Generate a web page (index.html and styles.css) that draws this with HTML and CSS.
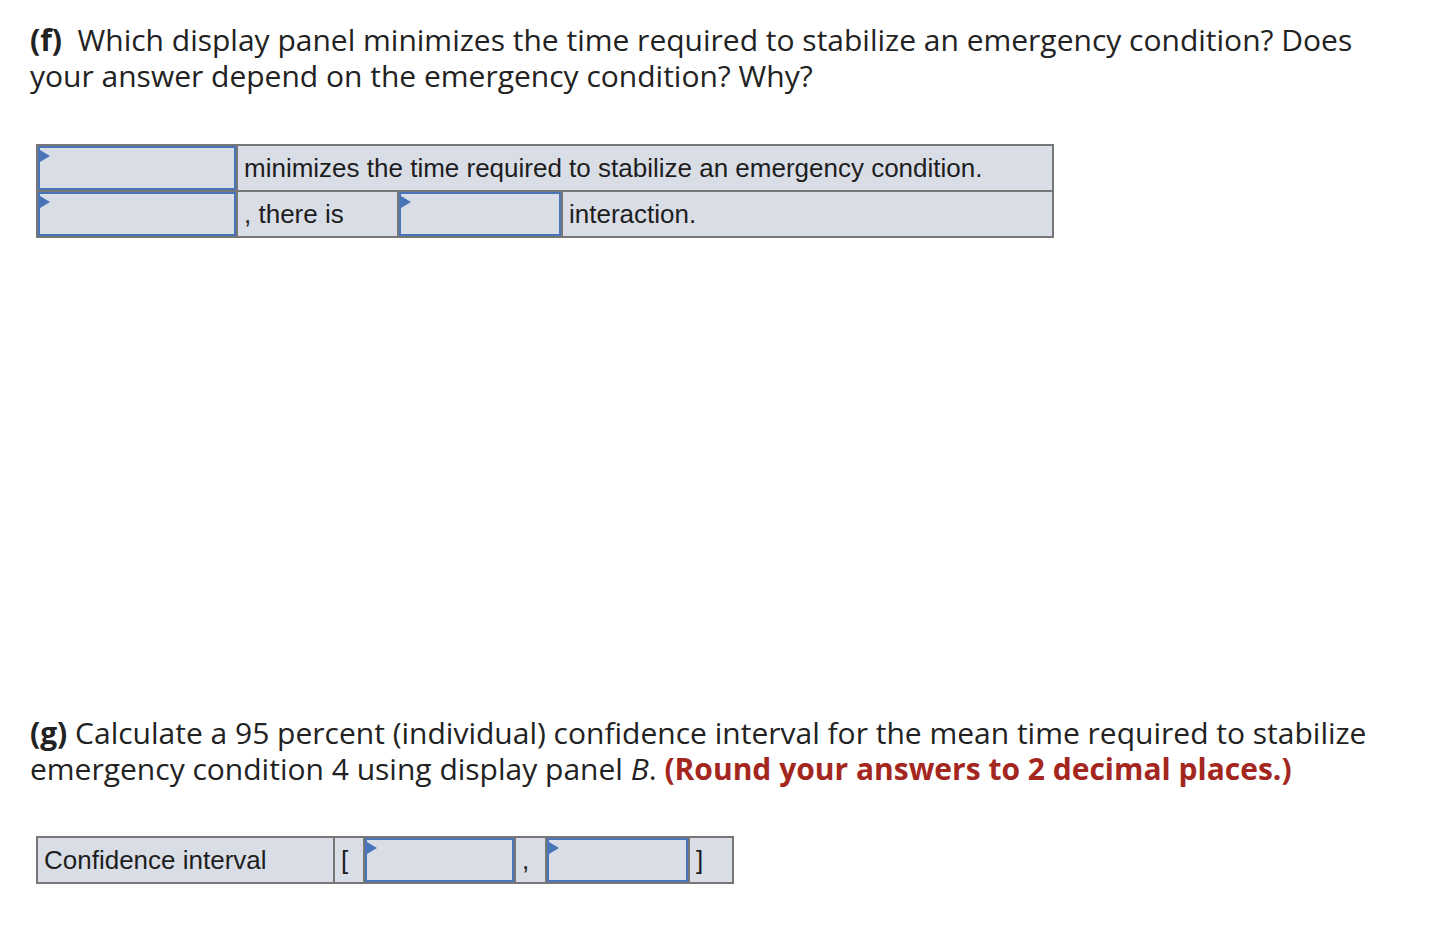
FILE: index.html
```html
<!DOCTYPE html>
<html>
<head>
<meta charset="utf-8">
<link rel="stylesheet" href="styles.css">
</head>
<body>
<div class="page">
  <section class="part part-f">
    <p class="prompt"><b>(f)</b>&nbsp; Which display panel minimizes the time required to stabilize an emergency condition? Does your answer depend on the emergency condition? Why?</p>
    <table class="answers answers-f">
      <tr>
        <td class="slot w-a"><div class="box"><span class="flag"></span></div></td>
        <td class="txt" colspan="3">minimizes the time required to stabilize an emergency condition.</td>
      </tr>
      <tr>
        <td class="slot w-a"><div class="box"><span class="flag"></span></div></td>
        <td class="txt w-b">, there is</td>
        <td class="slot w-c"><div class="box"><span class="flag"></span></div></td>
        <td class="txt">interaction.</td>
      </tr>
    </table>
  </section>
  <section class="part part-g">
    <p class="prompt"><b>(g)</b> Calculate a 95 percent (individual) confidence interval for the mean time required to stabilize emergency condition 4 using display panel <i>B</i>. <b class="red">(Round your answers to 2 decimal places.)</b></p>
    <table class="answers answers-g">
      <tr>
        <td class="txt ci-label">Confidence interval</td>
        <td class="txt br">[</td>
        <td class="slot ci-1"><div class="box"><span class="flag"></span></div></td>
        <td class="txt comma">,</td>
        <td class="slot ci-2"><div class="box"><span class="flag"></span></div></td>
        <td class="txt br2">]</td>
      </tr>
    </table>
  </section>
</div>
</body>
</html>
```
FILE: styles.css
```css
html, body {
  margin: 0;
  padding: 0;
  background: #ffffff;
}
.page {
  padding: 22px 0 0 30px;
}
.prompt {
  margin: 0;
  font-family: "Open Sans", "Noto Sans", sans-serif;
  font-size: 30px;
  line-height: 36px;
  letter-spacing: 0;
  color: #222222;
  width: 1370px;
  font-variant-ligatures: none;
}
.prompt b {
  font-weight: 700;
}
.prompt .red {
  color: #a4271f;
}
.answers {
  border-collapse: collapse;
  border: 2px solid #777777;
  margin-left: 6px;
  font-family: "Liberation Sans", Arial, sans-serif;
  font-size: 26px;
  color: #1e1e1e;
  background: #d9dde6;
}
.answers td {
  border: 2px solid #777777;
  padding: 0;
  height: 43px;
  vertical-align: middle;
}
.answers-f {
  margin-top: 50px;
  width: 1018px;
}
.answers .txt {
  padding: 0 6px;
  white-space: nowrap;
}
.slot {
  position: relative;
}
.box {
  box-sizing: border-box;
  height: 44px;
  border: 2px solid #4a74b8;
  position: relative;
}
.flag {
  position: absolute;
  left: 0;
  top: 2px;
  width: 0;
  height: 0;
  border-top: 6px solid transparent;
  border-bottom: 6px solid transparent;
  border-left: 10px solid #4a74b8;
}
.w-a { width: 198px; }
.w-b { width: 147px; }
.w-c { width: 162px; }
.part-g {
  margin-top: 477px;
}
.answers-g {
  margin-top: 49px;
}
.ci-label { width: 283px; }
.br { width: 16px; }
.ci-1 { width: 149px; }
.comma { width: 17px; }
.ci-2 { width: 141px; }
.br2 { width: 30px; }
```
